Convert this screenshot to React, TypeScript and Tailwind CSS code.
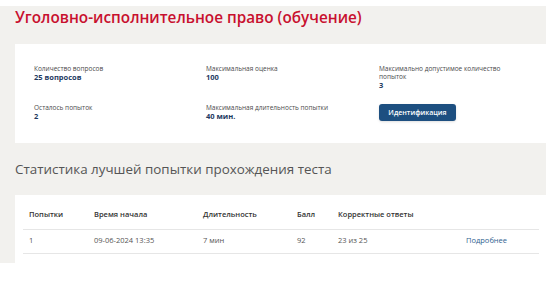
const info = [
  { label: "Количество вопросов", value: "25 вопросов" },
  { label: "Максимальная оценка", value: "100" },
  { label: "Максимально допустимое количество попыток", value: "3" },
  { label: "Осталось попыток", value: "2" },
  { label: "Максимальная длительность попытки", value: "40 мин." },
];

const cols = ["Попытки", "Время начала", "Длительность", "Балл", "Корректные ответы", ""];
const widths = ["w-[65px]", "w-[109px]", "w-[94px]", "w-[41px]", "w-[128px]", "w-[79px]"];

function InfoItem({ label, value }: { label: string; value: string }) {
  return (
    <div className="max-w-[130px]">
      <div className="text-[6.5px] leading-[8px] text-[#4a4a4a]">{label}</div>
      <div className="text-[7.5px] leading-[9px] font-bold text-[#1e3a5f]">{value}</div>
    </div>
  );
}

export default function App() {
  return (
    <div
      className="w-[546px] h-[285px] overflow-hidden bg-white pt-[6px]"
      style={{ fontFamily: '"Open Sans", "Noto Sans", sans-serif' }}
    >
      <div className="w-[620px] bg-[#f2f1ee] pl-[15px]">
        <h1 className="text-[15.3px] leading-[23px] font-semibold text-[#c8102e]">
          Уголовно-исполнительное право (обучение)
        </h1>

        <div className="mt-[15px] bg-white pl-[19px] pt-[21px] pb-[22px] grid grid-cols-[172px_173px_1fr] gap-y-[14px]">
          <InfoItem {...info[0]} />
          <InfoItem {...info[1]} />
          <InfoItem {...info[2]} />
          <InfoItem {...info[3]} />
          <InfoItem {...info[4]} />
          <div className="flex items-start">
            <button className="block w-[77px] h-[17px] rounded-[3px] bg-[#1d4f80] text-white text-[7px] leading-[17px] font-semibold shadow-sm">
              Идентификация
            </button>
          </div>
        </div>

        <h2 className="h-[52px] flex items-center text-[13.4px] text-[#555]">
          Статистика лучшей попытки прохождения теста
        </h2>

        <div className="bg-white pl-[8px] pt-[6px] pb-[9px]">
          <table className="border-collapse text-[7.5px] text-[#555]">
            <thead>
              <tr className="h-[28px] border-b border-[#e6e6e6]">
                {cols.map((c, i) => (
                  <th key={i} className={`${widths[i]} pl-[6px] text-left font-semibold text-[#333]`}>
                    {c}
                  </th>
                ))}
              </tr>
            </thead>
            <tbody>
              <tr className="h-[24px] border-b border-[#e6e6e6]">
                <td className="pl-[6px]">1</td>
                <td className="pl-[6px]">09-06-2024 13:35</td>
                <td className="pl-[6px]">7 мин</td>
                <td className="pl-[6px]">92</td>
                <td className="pl-[6px]">23 из 25</td>
                <td className="pl-[6px] text-[#2f5f8f]">Подробнее</td>
              </tr>
            </tbody>
          </table>
        </div>
      </div>
    </div>
  );
}
